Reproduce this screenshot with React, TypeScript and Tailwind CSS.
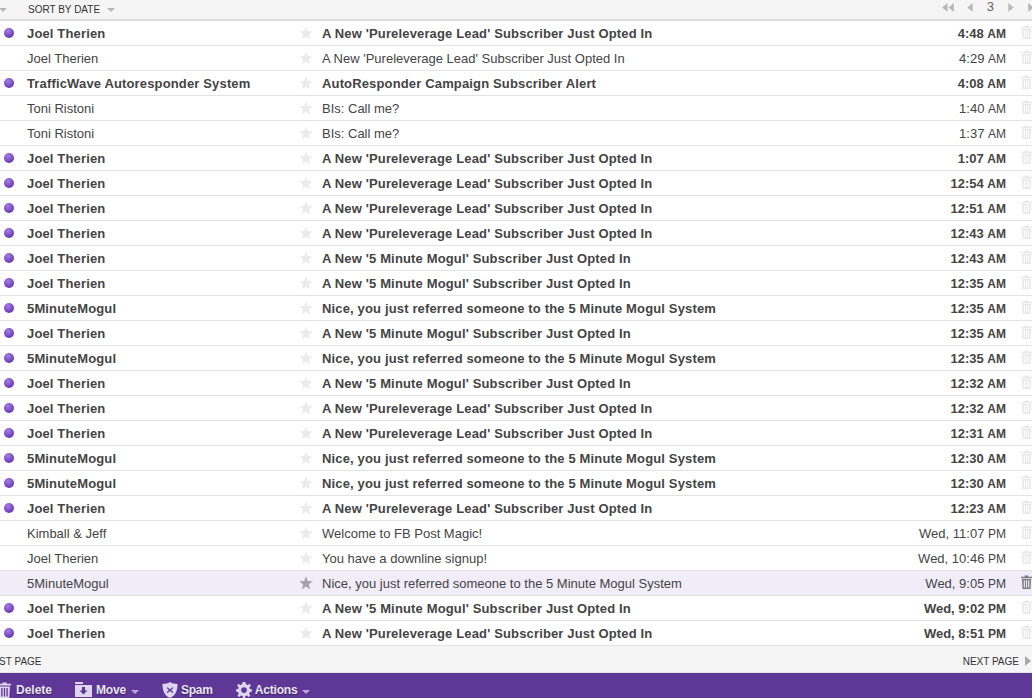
type Mail = {
    from: string,
    subject: string,
    day?: string,
    time: string,
    ampm: string,
    unread: boolean,
    active?: boolean
}

const PURE = "A New 'Pureleverage Lead' Subscriber Just Opted In";
const MOGUL = "A New '5 Minute Mogul' Subscriber Just Opted In";
const NICE = "Nice, you just referred someone to the 5 Minute Mogul System";
const JOEL = "Joel Therien";
const FIVE = "5MinuteMogul";

const mails: Mail[] = [
    {from: JOEL, subject: PURE, time: "4:48", ampm: "AM", unread: true},
    {from: JOEL, subject: PURE, time: "4:29", ampm: "AM", unread: false},
    {from: "TrafficWave Autoresponder System", subject: "AutoResponder Campaign Subscriber Alert", time: "4:08", ampm: "AM", unread: true},
    {from: "Toni Ristoni", subject: "BIs: Call me?", time: "1:40", ampm: "AM", unread: false},
    {from: "Toni Ristoni", subject: "BIs: Call me?", time: "1:37", ampm: "AM", unread: false},
    {from: JOEL, subject: PURE, time: "1:07", ampm: "AM", unread: true},
    {from: JOEL, subject: PURE, time: "12:54", ampm: "AM", unread: true},
    {from: JOEL, subject: PURE, time: "12:51", ampm: "AM", unread: true},
    {from: JOEL, subject: PURE, time: "12:43", ampm: "AM", unread: true},
    {from: JOEL, subject: MOGUL, time: "12:43", ampm: "AM", unread: true},
    {from: JOEL, subject: MOGUL, time: "12:35", ampm: "AM", unread: true},
    {from: FIVE, subject: NICE, time: "12:35", ampm: "AM", unread: true},
    {from: JOEL, subject: MOGUL, time: "12:35", ampm: "AM", unread: true},
    {from: FIVE, subject: NICE, time: "12:35", ampm: "AM", unread: true},
    {from: JOEL, subject: MOGUL, time: "12:32", ampm: "AM", unread: true},
    {from: JOEL, subject: PURE, time: "12:32", ampm: "AM", unread: true},
    {from: JOEL, subject: PURE, time: "12:31", ampm: "AM", unread: true},
    {from: FIVE, subject: NICE, time: "12:30", ampm: "AM", unread: true},
    {from: FIVE, subject: NICE, time: "12:30", ampm: "AM", unread: true},
    {from: JOEL, subject: PURE, time: "12:23", ampm: "AM", unread: true},
    {from: "Kimball & Jeff", subject: "Welcome to FB Post Magic!", day: "Wed, ", time: "11:07", ampm: "PM", unread: false},
    {from: JOEL, subject: "You have a downline signup!", day: "Wed, ", time: "10:46", ampm: "PM", unread: false},
    {from: FIVE, subject: NICE, day: "Wed, ", time: "9:05", ampm: "PM", unread: false, active: true},
    {from: JOEL, subject: MOGUL, day: "Wed, ", time: "9:02", ampm: "PM", unread: true},
    {from: JOEL, subject: PURE, day: "Wed, ", time: "8:51", ampm: "PM", unread: true},
];

function Star({active}: {active?: boolean}) {
    return (
        <svg width="14" height="14" viewBox="0 0 14 14" className={active ? "fill-[#a3a3a8]" : "fill-[#ebebeb]"}>
            <path d="M7 0.3 L8.8 5 L13.8 5.2 L9.9 8.4 L11.2 13.4 L7 10.6 L2.8 13.4 L4.1 8.4 L0.2 5.2 L5.2 5 Z"/>
        </svg>
    )
}

function Trash({className}: {className: string}) {
    return (
        <svg width="11" height="14" viewBox="0 0 12 15" className={className}>
            <path d="M4 0.5 H8 V1.7 H12 V3.4 H0 V1.7 H4 Z"/>
            <path fillRule="evenodd" d="M1 4.2 H11 L10.4 15 H1.6 Z M3 5.6 V13.6 H4.2 V5.6 Z M5.4 5.6 V13.6 H6.6 V5.6 Z M7.8 5.6 V13.6 H9 V5.6 Z"/>
        </svg>
    )
}

function Caret({className}: {className: string}) {
    return <span className={"inline-block w-0 h-0 border-x-[4px] border-x-transparent border-t-[4px] " + className}/>
}

function Row({mail}: {mail: Mail}) {
    const weight = mail.unread ? "font-bold" : "font-normal";
    const spacing = mail.unread ? " tracking-[0.15px]" : "";
    return (
        <div className={"flex items-center h-[25px] shrink-0 border-b border-[#e3e3e3] text-[13px] text-[#444] " + (mail.active ? "bg-[#f0edf8]" : "bg-white")}>
            <div className="w-[27px] pl-1 shrink-0">
                {mail.unread && <div className="w-[10px] h-[10px] rounded-full bg-[radial-gradient(circle_at_40%_30%,#a27fe0,#6a35b8_75%)]"/>}
            </div>
            <div className={"w-[272px] shrink-0 truncate mt-[2px] " + weight + spacing}>{mail.from}</div>
            <div className="w-[23px] shrink-0 flex"><Star active={mail.active}/></div>
            <div className={"w-[560px] shrink-0 truncate mt-[2px] " + weight + spacing}>{mail.subject}</div>
            <div className={"w-[124px] shrink-0 text-right whitespace-nowrap mt-[2px] " + weight}>
                {mail.day}{mail.time} <span className="text-[12px]">{mail.ampm}</span>
            </div>
            <div className="flex-1 flex justify-end mb-[3px]">
                <Trash className={mail.active ? "fill-[#7d7d7d]" : "fill-[#e8e8e8]"}/>
            </div>
        </div>
    )
}

function Pager() {
    return (
        <div className="flex items-center text-[13px] mb-[5px]">
            <svg width="12" height="9" viewBox="0 0 13 10" className="fill-[#b8b8b8] mr-[13px]">
                <path d="M6 0 V10 L0 5 Z M13 0 V10 L7 5 Z"/>
            </svg>
            <svg width="6" height="9" viewBox="0 0 6 10" className="fill-[#b8b8b8] mr-[14px]"><path d="M6 0 V10 L0 5 Z"/></svg>
            <span className="text-[#666] mr-[14px]">3</span>
            <svg width="6" height="9" viewBox="0 0 6 10" className="fill-[#b8b8b8] mr-[14px]"><path d="M0 0 V10 L6 5 Z"/></svg>
            <svg width="4" height="9" viewBox="0 0 4 10" className="fill-[#b8b8b8]"><path d="M0 0 V10 L6 5 Z"/></svg>
        </div>
    )
}

export default function App() {
    return (
        <div className="w-[1032px] h-[698px] overflow-hidden flex flex-col bg-white font-['Liberation_Sans',Arial,sans-serif]">
            <div className="flex items-center h-[21px] shrink-0 bg-[#f5f5f5] border-b-2 border-[#dcdcdc] text-[10px] text-[#333]">
                <Caret className="border-t-[#b8b8b8] ml-[-1px] mr-[21px]"/>
                <span>SORT BY DATE</span>
                <Caret className="border-t-[#b8b8b8] ml-[7px]"/>
                <div className="flex-1"/>
                <Pager/>
            </div>
            {mails.map((mail, i) => <Row key={i} mail={mail}/>)}
            <div className="flex items-center justify-between h-[27px] shrink-0 pt-[4px] bg-[#f5f5f5] border-b border-[#e3e3e3] text-[10px] text-[#333]">
                <span className="ml-[-17px]">FIRST PAGE</span>
                <div className="flex items-center gap-[6px] pr-[1px]">
                    <span>NEXT PAGE</span>
                    <svg width="6" height="10" viewBox="0 0 6 10" className="fill-[#a8a8a8]"><path d="M0 0 V10 L6 5 Z"/></svg>
                </div>
            </div>
            <div className="h-[25px] shrink-0 overflow-hidden bg-[#5f3797] flex items-start text-[12px] font-bold text-[#ebe6f4] pt-[7px] [text-shadow:0_1px_1px_rgba(0,0,0,0.45)]">
                <div className="flex items-center ml-[-2px]">
                    <svg width="13" height="18" viewBox="0 0 12 15" className="fill-[#ded6ee] shrink-0">
                        <path d="M4 0.5 H8 V1.7 H12 V3.4 H0 V1.7 H4 Z"/>
                        <path fillRule="evenodd" d="M1 4.2 H11 L10.4 15 H1.6 Z M3 5.6 V13.6 H4.2 V5.6 Z M5.4 5.6 V13.6 H6.6 V5.6 Z M7.8 5.6 V13.6 H9 V5.6 Z"/>
                    </svg>
                    <span className="ml-[5px] mt-[1px]">Delete</span>
                </div>
                <div className="flex items-center ml-[23px]">
                    <svg width="17" height="15" viewBox="0 0 17 15" className="fill-[#ded6ee] shrink-0">
                        <path fillRule="evenodd" d="M0 0 H8 V2 H0 Z M0 3 H17 V15 H0 Z M7 5 V8.5 H4.5 L8.5 12.5 L12.5 8.5 H10 V5 Z"/>
                    </svg>
                    <span className="ml-[4px] mt-[1px] tracking-[-0.2px]">Move</span>
                    <Caret className="border-t-[#b9a6d8] ml-[5px] mt-[4px]"/>
                </div>
                <div className="flex items-center ml-[23px]">
                    <svg width="16" height="16" viewBox="0 0 16 17" className="fill-[#ded6ee] shrink-0">
                        <path fillRule="evenodd" d="M8 0 C10 1.5 13 2 16 2 C16 9 14 14 8 17 C2 14 0 9 0 2 C3 2 6 1.5 8 0 Z M5.5 5.5 L4.5 6.5 L6.8 8.6 L4.5 10.8 L5.5 11.8 L8 9.6 L10.5 11.8 L11.5 10.8 L9.2 8.6 L11.5 6.5 L10.5 5.5 L8 7.6 Z"/>
                    </svg>
                    <span className="ml-[3px] mt-[1px] tracking-[-0.2px]">Spam</span>
                </div>
                <div className="flex items-center ml-[23px]">
                    <svg width="16" height="16" viewBox="0 0 17 17" className="fill-[#ded6ee] shrink-0">
                        <path fillRule="evenodd" d="M7 0 H10 L10.5 2.4 L12.4 3.2 L14.5 1.9 L16 4 L14.2 5.6 L14.7 7.4 L17 7.9 V10 L14.7 10.5 L14 12.4 L15.3 14.5 L13.4 16 L11.6 14.4 L10 15 L9.6 17 H7.4 L7 15 L5.2 14.4 L3.4 16 L1.6 14.5 L2.9 12.4 L2.2 10.5 L0 10 V7.9 L2.2 7.4 L2.8 5.6 L1.1 4 L2.6 1.9 L4.6 3.2 L6.5 2.4 Z M8.5 5.6 A3 3 0 1 0 8.5 11.6 A3 3 0 1 0 8.5 5.6 Z"/>
                    </svg>
                    <span className="ml-[3px] mt-[1px] tracking-[-0.2px]">Actions</span>
                    <Caret className="border-t-[#b9a6d8] ml-[5px] mt-[4px]"/>
                </div>
            </div>
        </div>
    )
}
